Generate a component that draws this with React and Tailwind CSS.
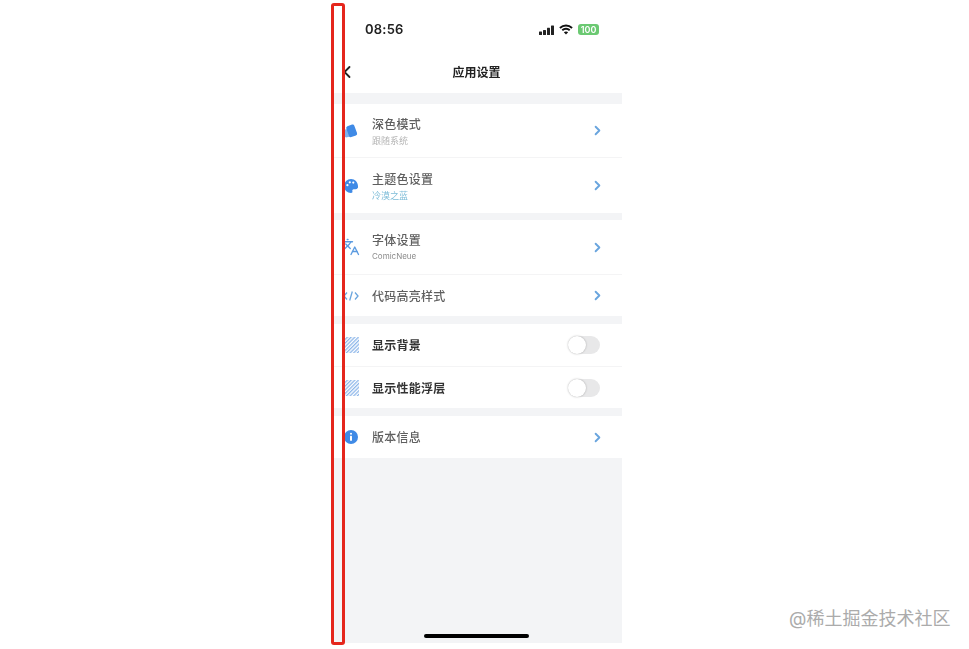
import React from 'react'
import { Languages, ChevronRight, ChevronLeft } from 'lucide-react'

const DarkIcon = () => (
  <svg width="16" height="16" viewBox="0 0 16 16">
    <rect x="1" y="6" width="8" height="8" rx="2" fill="#7fb2ee" transform="rotate(-12 5 10)" />
    <rect x="4.5" y="2" width="8.5" height="11.5" rx="1.8" fill="#3f8ae6" transform="rotate(-20 9 8)" />
  </svg>
)

const PaletteIcon = () => (
  <svg width="16" height="16" viewBox="0 0 16 16">
    <path d="M8 1a7 7 0 0 0 0 14c1.2 0 1.7-.8 1.4-1.700-.4-1 .2-2 1.300-2h1.800A2.500 2.500 0 0 0 15 8.200C15 4.200 11.900 1 8 1z" fill="#3f8ae6" />
    <circle cx="4.400" cy="7.200" r="1.100" fill="#fff" />
    <circle cx="6.800" cy="4.300" r="1.100" fill="#fff" />
    <circle cx="10.300" cy="4.600" r="1.100" fill="#fff" />
  </svg>
)

const CodeIcon = () => (
  <svg width="16" height="16" viewBox="0 0 16 16" fill="none" stroke="#6aa5de" strokeWidth="1.300">
    <path d="M4 4.500L1 8l3 3.500" />
    <path d="M9.300 3.500L6.700 12.500" />
    <path d="M12 4.500L15 8l-3 3.500" />
  </svg>
)

const HatchIcon = ({ id }) => (
  <svg width="16" height="16" viewBox="0 0 16 16">
    <defs>
      <pattern id={id} width="2.600" height="2.600" patternUnits="userSpaceOnUse" patternTransform="rotate(45)">
        <rect width="1.300" height="2.600" fill="#8fb8ea" />
      </pattern>
    </defs>
    <rect width="16" height="16" fill={`url(#${id})`} />
  </svg>
)

const InfoIcon = () => (
  <svg width="16" height="16" viewBox="0 0 16 16">
    <circle cx="8" cy="8" r="7" fill="#3f8ae6" />
    <circle cx="8" cy="4.800" r="1" fill="#fff" />
    <rect x="7" y="6.800" width="2" height="5" rx="0.600" fill="#fff" />
  </svg>
)

const Chevron = () => <ChevronRight size={15} strokeWidth={3} className="text-[#6aa5de] -mr-[5px]" />

const Toggle = () => (
  <div className="w-[32px] h-[18px] rounded-full bg-[#e8e8e9] flex items-center">
    <div className="w-[18px] h-[18px] rounded-full bg-white shadow-[0_0_2px_rgba(0,0,0,0.3)]" />
  </div>
)

const Row = ({ icon, title, sub, subClass, right, height, strong, line }) => (
  <div className={`${height} ${line ? 'border-b border-[#f4f4f5]' : ''} bg-white flex items-center pl-[12px] pr-[22px]`}>
    <div className="w-[16px] h-[16px] shrink-0 flex items-center justify-center">{icon}</div>
    <div className="ml-[13px] flex-1 pt-[1px]">
      <div className={`text-[12px] leading-[15px] tracking-[0.25px] ${strong ? 'text-[#333] font-semibold' : 'text-[#5f5f5f] font-medium'}`}>{title}</div>
      {sub && <div className={`leading-[11px] mt-[3px] ${subClass}`}>{sub}</div>}
    </div>
    {right}
  </div>
)

const Gap = ({ height }) => <div className={height} />

export default function App() {
  return (
    <div className="relative w-[969px] h-[649px] overflow-hidden bg-white font-['Inter','Noto_Sans_CJK_SC',sans-serif]">
      <div className="ml-[331px] w-[291px] h-[643px] bg-[#f3f4f6] flex flex-col blur-[0.4px]">
        {/* status bar */}
        <div className="h-[50px] bg-white flex items-center justify-between pl-[34px] pr-[23px] pt-[9px]">
          <span className="text-[13px] font-semibold text-[#222] tracking-[0.2px]">08:56</span>
          <div className="flex items-center gap-[5px]">
            <svg width="15" height="10" viewBox="0 0 15 10">
              <rect x="0" y="6.500" width="3" height="3.500" rx="0.500" fill="#222" />
              <rect x="4" y="5" width="3" height="5" rx="0.500" fill="#222" />
              <rect x="8" y="2.800" width="3" height="7.200" rx="0.500" fill="#222" />
              <rect x="12" y="0.500" width="3" height="9.500" rx="0.500" fill="#222" />
            </svg>
            <svg width="14" height="11" viewBox="0 0 15 11" fill="none" stroke="#111" strokeWidth="2.100">
              <path d="M1 3.800c3.700-3.300 9.300-3.300 13 0" />
              <path d="M3.500 6.300c2.300-2 5.700-2 8 0" />
              <path d="M7.500 10.800l-2.300-2.300c1.200-1 3.400-1 4.600 0z" fill="#111" stroke="none" />
            </svg>
            <div className="w-[21px] h-[11px] rounded-[3px] bg-[#6bc972] flex items-center justify-center text-[9px] leading-none font-semibold text-white">100</div>
          </div>
        </div>

        {/* header */}
        <div className="h-[43px] bg-white flex items-center justify-center relative pt-[2px]">
          <ChevronLeft size={20} strokeWidth={2.200} className="absolute left-[6px] top-[12px] text-[#222]" />
          <span className="text-[12px] font-semibold text-[#222]">应用设置</span>
        </div>

        <Gap height="h-[11px]" />
        <Row height="h-[54px]" line icon={<DarkIcon />} title="深色模式" sub="跟随系统" subClass="text-[9px] text-[#b5b5b5]" right={<Chevron />} />
        <Row height="h-[55px]" icon={<PaletteIcon />} title="主题色设置" sub="冷漠之蓝" subClass="text-[9px] text-[#7dbcd8]" right={<Chevron />} />
        <Gap height="h-[7px]" />
        <Row height="h-[55px]" line icon={<Languages size={18} strokeWidth={1.800} className="shrink-0 text-[#5b9be0]" />} title="字体设置" sub="ComicNeue" subClass="text-[8px] text-[#8a8a8a]" right={<Chevron />} />
        <Row height="h-[41px]" icon={<CodeIcon />} title="代码高亮样式" right={<Chevron />} />
        <Gap height="h-[8px]" />
        <Row height="h-[43px]" line strong icon={<HatchIcon id="hatch-a" />} title="显示背景" right={<Toggle />} />
        <Row height="h-[41px]" strong icon={<HatchIcon id="hatch-b" />} title="显示性能浮层" right={<Toggle />} />
        <Gap height="h-[8px]" />
        <Row height="h-[42px]" icon={<InfoIcon />} title="版本信息" right={<Chevron />} />

        <div className="mt-auto mb-[5px] self-center w-[105px] h-[4px] rounded-full bg-black" />
      </div>

      {/* annotation drawn on top of the screenshot */}
      <div className="absolute left-[331px] top-[3px] w-[14px] h-[642px] border-[3px] border-[#e5261c] rounded-[3px]" />

      {/* watermark */}
      <div className="absolute left-[789px] top-[607px] text-[18px] leading-[24px] text-[#ababab] whitespace-nowrap">@稀土掘金技术社区</div>
    </div>
  )
}
